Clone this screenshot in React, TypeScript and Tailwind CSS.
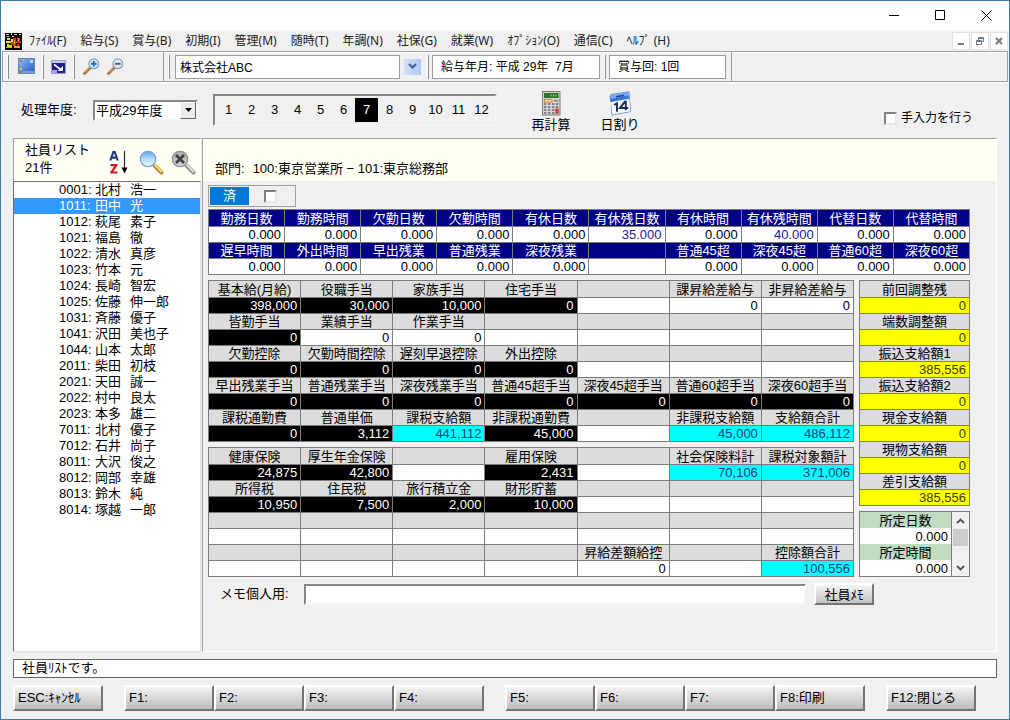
import { useState } from 'react';
import clsx from 'clsx';

type Tone = 'white' | 'black' | 'cyan' | 'yellow' | 'blue';
type Cell = [label: string, value: string, tone?: Tone];

const EMPTY: Cell = ['', ''];

const menus = [
  'ﾌｧｲﾙ(F)',
  '給与(S)',
  '賞与(B)',
  '初期(I)',
  '管理(M)',
  '随時(T)',
  '年調(N)',
  '社保(G)',
  '就業(W)',
  'ｵﾌﾟｼｮﾝ(O)',
  '通信(C)',
  'ﾍﾙﾌﾟ (H)',
];

const employees = [
  ['0001', '北村', '浩一'],
  ['1011', '田中', '光'],
  ['1012', '萩尾', '素子'],
  ['1021', '福島', '徹'],
  ['1022', '清水', '真彦'],
  ['1023', '竹本', '元'],
  ['1024', '長崎', '智宏'],
  ['1025', '佐藤', '伸一郎'],
  ['1031', '斉藤', '優子'],
  ['1041', '沢田', '美也子'],
  ['1044', '山本', '太郎'],
  ['2011', '柴田', '初枝'],
  ['2021', '天田', '誠一'],
  ['2022', '村中', '良太'],
  ['2023', '本多', '雄二'],
  ['7011', '北村', '優子'],
  ['7012', '石井', '尚子'],
  ['8011', '大沢', '俊之'],
  ['8012', '岡部', '幸雄'],
  ['8013', '鈴木', '純'],
  ['8014', '塚越', '一郎'],
];

const attendance: Cell[][] = [
  [
    ['勤務日数', '0.000'],
    ['勤務時間', '0.000'],
    ['欠勤日数', '0.000'],
    ['欠勤時間', '0.000'],
    ['有休日数', '0.000'],
    ['有休残日数', '35.000', 'blue'],
    ['有休時間', '0.000'],
    ['有休残時間', '40.000', 'blue'],
    ['代替日数', '0.000'],
    ['代替時間', '0.000'],
  ],
  [
    ['遅早時間', '0.000'],
    ['外出時間', '0.000'],
    ['早出残業', '0.000'],
    ['普通残業', '0.000'],
    ['深夜残業', '0.000'],
    EMPTY,
    ['普通45超', '0.000'],
    ['深夜45超', '0.000'],
    ['普通60超', '0.000'],
    ['深夜60超', '0.000'],
  ],
];

const payments: Cell[][] = [
  [
    ['基本給(月給)', '398,000', 'black'],
    ['役職手当', '30,000', 'black'],
    ['家族手当', '10,000', 'black'],
    ['住宅手当', '0', 'black'],
    EMPTY,
    ['課昇給差給与', '0'],
    ['非昇給差給与', '0'],
  ],
  [['皆勤手当', '0', 'black'], ['業績手当', '0'], ['作業手当', '0'], EMPTY, EMPTY, EMPTY, EMPTY],
  [
    ['欠勤控除', '0', 'black'],
    ['欠勤時間控除', '0', 'black'],
    ['遅刻早退控除', '0', 'black'],
    ['外出控除', '0', 'black'],
    EMPTY,
    EMPTY,
    EMPTY,
  ],
  [
    ['早出残業手当', '0', 'black'],
    ['普通残業手当', '0', 'black'],
    ['深夜残業手当', '0', 'black'],
    ['普通45超手当', '0', 'black'],
    ['深夜45超手当', '0', 'black'],
    ['普通60超手当', '0', 'black'],
    ['深夜60超手当', '0', 'black'],
  ],
  [
    ['課税通勤費', '0', 'black'],
    ['普通単価', '3,112', 'black'],
    ['課税支給額', '441,112', 'cyan'],
    ['非課税通勤費', '45,000', 'black'],
    EMPTY,
    ['非課税支給額', '45,000', 'cyan'],
    ['支給額合計', '486,112', 'cyan'],
  ],
];

const deductions: Cell[][] = [
  [
    ['健康保険', '24,875', 'black'],
    ['厚生年金保険', '42,800', 'black'],
    EMPTY,
    ['雇用保険', '2,431', 'black'],
    EMPTY,
    ['社会保険料計', '70,106', 'cyan'],
    ['課税対象額計', '371,006', 'cyan'],
  ],
  [
    ['所得税', '10,950', 'black'],
    ['住民税', '7,500', 'black'],
    ['旅行積立金', '2,000', 'black'],
    ['財形貯蓄', '10,000', 'black'],
    EMPTY,
    EMPTY,
    EMPTY,
  ],
  [EMPTY, EMPTY, EMPTY, EMPTY, EMPTY, EMPTY, EMPTY],
  [EMPTY, EMPTY, EMPTY, EMPTY, ['昇給差額給控', '0'], EMPTY, ['控除額合計', '100,556', 'cyan']],
];

const totals: Cell[][] = [
  [['前回調整残', '0', 'yellow']],
  [['端数調整額', '0', 'yellow']],
  [['振込支給額1', '385,556', 'yellow']],
  [['振込支給額2', '0', 'yellow']],
  [['現金支給額', '0', 'yellow']],
  [['現物支給額', '0', 'yellow']],
  [['差引支給額', '385,556', 'yellow']],
];

const scheduled: Cell[][] = [[['所定日数', '0.000']], [['所定時間', '0.000']]];

const tones: Record<Tone, string> = {
  white: 'bg-white text-black',
  black: 'bg-black text-white',
  cyan: 'bg-[#00ffff] text-[#203c78]',
  yellow: 'bg-[#ffff00] text-[#3c3c00]',
  blue: 'bg-white text-[#1c1c8c]',
};

const sunken = 'border-2 border-t-[#868686] border-l-[#868686] border-r-[#f4f4f4] border-b-[#f4f4f4]';

function DataGrid({ rows, head, label, plain }: { rows: Cell[][]; head: string; label: string; plain?: boolean }) {
  const edge = plain ? 'border-0' : 'border border-[#7c7c7c]';
  return (
    <table aria-label={label} className="w-full table-fixed border-collapse text-[13px] leading-[15px]">
      {rows.map((row, r) => (
        <tbody key={r}>
          <tr className={r === 0 && !plain ? 'h-[17px]' : 'h-4'}>
            {row.map(([name], c) => (
              <th key={c} className={clsx('p-0 text-center font-normal whitespace-nowrap', edge, head)}>
                {name}
              </th>
            ))}
          </tr>
          <tr className="h-4">
            {row.map(([, value, tone], c) => (
              <td key={c} className={clsx('py-0 pr-[3px] pl-0 text-right', edge, tones[tone ?? 'white'])}>
                {value}
              </td>
            ))}
          </tr>
        </tbody>
      ))}
    </table>
  );
}

function CheckBox({ id, label }: { id: string; label?: string }) {
  return (
    <input
      id={id}
      type="checkbox"
      aria-label={label}
      className="size-[13px] shrink-0 appearance-none border-2 border-t-[#808080] border-r-[#e6e6e6] border-b-[#e6e6e6] border-l-[#808080] bg-white checked:bg-[#404040]"
    />
  );
}

function KeyButton({ children }: { children: string }) {
  return (
    <button className="h-[26px] w-[90px] border-2 border-t-white border-r-[#747474] border-b-[#747474] border-l-white bg-linear-to-b from-[#f4f4f4] to-[#bcbcbc] pl-[3px] text-left text-[13px] leading-5 whitespace-nowrap">
      {children}
    </button>
  );
}

function AppIcon() {
  return (
    <svg width="17" height="17" viewBox="0 0 17 17" shapeRendering="crispEdges" aria-hidden="true">
      <rect width="17" height="17" fill="#000" />
      <path d="M1 1h3v1H1zM6 0h1v2H6zM9 1h3v1H9zM14 1h2v1h-2zM2 3h2v1H2zM7 3h2v1H7z" fill="#e8d8c8" />
      <path d="M2 5h3v2H2zM1 8h5v2H1zM2 11h2v3H2zM4 12h3v2H4zM6 6h2v3H6z" fill="#f8d820" />
      <path d="M8 5h3v8H8zM12 5h3v4h-3zM11 8h5v2h-5zM12 11h2v2h-2zM6 9h2v3H6z" fill="#e02c18" />
      <path d="M1 14h6v1H1zM9 13h6v2H9zM9 7h1v4H9zM13 6h1v2h-1z" fill="#f8a020" />
    </svg>
  );
}

function ScreenIcon() {
  return (
    <svg width="17" height="17" viewBox="0 0 17 17" aria-hidden="true">
      <defs>
        <linearGradient id="screen" x1="0" y1="0" x2="1" y2="1">
          <stop offset="0" stopColor="#8cc0f8" />
          <stop offset="1" stopColor="#2454c0" />
        </linearGradient>
      </defs>
      <rect x="0.5" y="0.5" width="16" height="15" fill="url(#screen)" stroke="#6c84b0" />
      <rect x="1" y="13" width="15" height="2" fill="#7c9cd0" />
      <rect x="2" y="2" width="2" height="2" fill="#d86040" />
      <rect x="2" y="6" width="2" height="2" fill="#70c070" />
      <rect x="2" y="10" width="2" height="2" fill="#e8c850" />
      <rect x="12" y="2" width="3" height="3" fill="#a8e4f8" />
      <rect x="1" y="13" width="4" height="2" fill="#58a850" />
    </svg>
  );
}

function ShrinkIcon() {
  return (
    <svg width="15" height="14" viewBox="0 0 15 14" aria-hidden="true">
      <rect x="0.5" y="0.5" width="14" height="13" fill="#20208c" stroke="#9c9cc8" />
      <path d="M1 1h13v2H1z" fill="#c8ccec" />
      <path d="M1 10h5v3H1z" fill="#a4a8dc" />
      <path d="M3 4.5l6.5 4.8" fill="none" stroke="#fff" strokeWidth="1.6" />
      <path d="M12 6v5H6.5z" fill="#fff" />
    </svg>
  );
}

function ZoomIcon({ plus }: { plus?: boolean }) {
  return (
    <svg width="17" height="17" viewBox="0 0 17 17" aria-hidden="true">
      <path d="M1.5 15.5L8 9" stroke="#a86838" strokeWidth="2.6" strokeLinecap="round" />
      <path d="M1.8 14.6L7 9.4" stroke="#e8b888" strokeWidth="0.9" />
      <circle cx="10.8" cy="5.8" r="4.9" fill="#d4ecfc" stroke="#7ca0c8" strokeWidth="1.2" />
      <path d="M8 5.8h5.6" stroke={plus ? '#2468c0' : '#a83c30'} strokeWidth="1.9" />
      {plus && <path d="M10.8 3v5.6" stroke="#2468c0" strokeWidth="1.9" />}
    </svg>
  );
}

function SortIcon() {
  return (
    <svg width="20" height="25" viewBox="0 0 20 25" aria-hidden="true">
      <path d="M1.3 10.5L4.3 2h1.4l3 8.5M2.6 7.6h4.8" fill="none" stroke="#1c3c78" strokeWidth="2.1" />
      <path d="M1.5 14h7v1.6L4.4 21.4h4.2v2.2H1.2V22l4.1-5.8H1.5z" fill="#d01828" />
      <path d="M15.5 1v18" stroke="#303030" strokeWidth="1.2" />
      <path d="M12.5 17.5h6l-3 6z" fill="#000" />
    </svg>
  );
}

function SearchIcon({ cancel }: { cancel?: boolean }) {
  const id = cancel ? 'lensOff' : 'lensOn';
  return (
    <svg width="25" height="25" viewBox="0 0 25 25" aria-hidden="true">
      <defs>
        <linearGradient id={id} x1="0" y1="0" x2="0" y2="1">
          <stop offset="0" stopColor={cancel ? '#a8a8a8' : '#5ca8ec'} />
          <stop offset="0.5" stopColor={cancel ? '#c0c0c0' : '#b4dcfc'} />
          <stop offset="1" stopColor={cancel ? '#dcdcdc' : '#ecf8ff'} />
        </linearGradient>
      </defs>
      <path d="M15.5 15.5l7 7" stroke={cancel ? '#8c8c8c' : '#b08428'} strokeWidth="4" strokeLinecap="round" />
      <path d="M16 15l6.5 6.8" stroke={cancel ? '#dcdcdc' : '#fcd470'} strokeWidth="2" strokeLinecap="round" />
      <circle cx="9" cy="9" r="7.7" fill={`url(#${id})`} stroke={cancel ? '#909090' : '#7ca4d0'} strokeWidth="1.3" />
      {cancel && <path d="M5 5l8 8M13 5l-8 8" stroke="#404040" strokeWidth="2.6" />}
    </svg>
  );
}

function CalculatorIcon() {
  return (
    <svg width="19" height="25" viewBox="0 0 19 25" aria-hidden="true">
      <rect x="0.5" y="0.5" width="17.5" height="23.5" fill="#d4d4d0" stroke="#787874" />
      <rect x="2" y="2" width="14.5" height="5" fill="#287828" />
      <path d="M9 3.5v2M11.5 3.5v2M14 3.5v2" stroke="#90e890" />
      <rect x="2.5" y="8.5" width="7.5" height="2.5" fill="#fce890" stroke="#d09020" />
      <path d="M12 9.8h4.5" stroke="#909090" strokeWidth="2" />
      {[13, 16, 19, 22].map(y => (
        <path key={y} d={`M2 ${y}h2.4M6 ${y}h2.4M10 ${y}h2.4M13.8 ${y}h2.4`} stroke="#80848c" strokeWidth="1.8" />
      ))}
      <rect x="13.3" y="17.5" width="3.4" height="5" fill="#d84038" />
    </svg>
  );
}

function CalendarIcon() {
  return (
    <svg width="22" height="25" viewBox="0 0 22 25" aria-hidden="true">
      <path d="M2 3.5L20 0.8l1.5 19.7L3 24z" fill="#c4d8f8" stroke="#5c80c8" strokeWidth="0.9" />
      <path d="M0.5 5L18 2l2.5 5.5L1.5 11z" fill="#3870d8" />
      <path d="M1 4.5L19 1.6l1 3L1.6 8z" fill="#78a8f4" />
      <path d="M7 5.8l8-1.4" stroke="#2048a8" strokeWidth="1.6" />
      <path d="M2 11.3l18.4-3 .8 12L3.4 23.4z" fill="#f4f8ff" />
      <path d="M5 14l3-1.6v8.4M16.8 19.2v-8.4h-1L11 17h8.2" fill="none" stroke="#182c50" strokeWidth="1.9" />
    </svg>
  );
}

function Grip() {
  return <span className="h-6 w-[2px] shrink-0 border-r border-l border-r-[#8c8c8c] border-l-white" />;
}

function TitleBar() {
  return (
    <header className="flex h-[30px] items-start justify-end gap-[10px] bg-white pt-[5px] pr-[5px]">
      <button aria-label="最小化" className="flex h-[18px] w-9 items-center justify-center">
        <svg width="11" height="11" viewBox="0 0 11 11" stroke="#000"><path d="M0 5.5h10" /></svg>
      </button>
      <button aria-label="最大化" className="flex h-[18px] w-9 items-center justify-center">
        <svg width="11" height="11" viewBox="0 0 11 11" fill="none" stroke="#000"><path d="M.5.5h9v9H.5z" /></svg>
      </button>
      <button aria-label="閉じる" className="flex h-[18px] w-9 items-center justify-center">
        <svg width="11" height="11" viewBox="0 0 11 11" stroke="#000"><path d="M.5.5l10 10M10.5.5l-10 10" /></svg>
      </button>
    </header>
  );
}

function MenuBar() {
  const small = 'flex h-[18px] w-[18px] items-center justify-center border border-[#e0e0e0] bg-white';
  return (
    <nav className="flex h-5 items-center pr-px pl-1">
      <AppIcon />
      <div className="ml-[7px] flex flex-1 gap-[14px] font-['Noto_Sans','Noto_Sans_CJK_JP',sans-serif] text-xs leading-[18px] whitespace-nowrap text-[#202020]">
        {menus.map(m => (
          <button key={m}>{m}</button>
        ))}
      </div>
      <div className="flex gap-px">
        <button aria-label="子ウィンドウを最小化" className={small}>
          <svg width="8" height="8" viewBox="0 0 8 8" stroke="#6c7c88" strokeWidth="2"><path d="M1 7h6" /></svg>
        </button>
        <button aria-label="子ウィンドウを元に戻す" className={small}>
          <svg width="8" height="8" viewBox="0 0 8 8" fill="none" stroke="#6c7c88"><path d="M2.5 3V.5h5v4H6M2.5 1.5h5M.5 3.5h5v4h-5zM.5 4.5h5" /></svg>
        </button>
        <button aria-label="子ウィンドウを閉じる" className={small}>
          <svg width="8" height="8" viewBox="0 0 8 8" stroke="#6c7c88" strokeWidth="2"><path d="M1 1l6 6M7 1L1 7" /></svg>
        </button>
      </div>
    </nav>
  );
}

function ToolBar() {
  const field = 'h-[24px] border border-[#9c9c9c] bg-white text-xs leading-[23px]';
  return (
    <div className="mx-px border border-[#a0a0a0] shadow-[inset_0_1px_#fff,0_1px_#fff]">
      <div className="flex h-[29px] w-[729px] items-center border-r border-[#9c9c9c]">
        <div className="flex h-full w-[161px] items-center border-r border-[#9c9c9c] pl-1">
          <Grip />
          <button aria-label="画面" className="ml-[9px]"><ScreenIcon /></button>
          <span className="mx-[7px] flex"><Grip /></span>
          <button aria-label="縮小表示"><ShrinkIcon /></button>
          <span className="mr-2 ml-[7px] flex"><Grip /></span>
          <button aria-label="拡大" className="mr-[7px]"><ZoomIcon plus /></button>
          <button aria-label="縮小"><ZoomIcon /></button>
        </div>
        <span className="mr-[5px] ml-1 flex"><Grip /></span>
        <input aria-label="会社名" readOnly value="株式会社ABC" className={clsx(field, 'w-[225px] px-1')} />
        <button
          aria-label="会社を選択"
          className="mr-[6px] ml-1 flex h-4 w-[17px] items-center justify-center bg-linear-to-r from-[#d0e0fc] to-[#b0c8f4]"
        >
          <svg width="9" height="7" viewBox="0 0 9 7" fill="none" stroke="#405c98" strokeWidth="2"><path d="M1 1l3.5 3.5L8 1" /></svg>
        </button>
        <Grip />
        <div className={clsx(field, 'ml-[3px] w-[168px] pl-2 whitespace-pre')}>給与年月: 平成 29年  7月</div>
        <span className="mr-[3px] ml-1 flex"><Grip /></span>
        <div className={clsx(field, 'w-[117px] pl-2')}>賞与回: 1回</div>
      </div>
    </div>
  );
}

function PeriodBar({ month, onMonth }: { month: number; onMonth: (m: number) => void }) {
  return (
    <div className="flex h-[56px] items-center pr-9 pl-5">
      <label htmlFor="year" className="w-[72px] text-[13px]">処理年度:</label>
      <div className="relative">
        <select
          id="year"
          className={clsx('block h-[21px] w-[105px] appearance-none bg-white pl-px text-[13px] leading-[17px]', sunken)}
        >
          <option>平成29年度</option>
        </select>
        <span className="pointer-events-none absolute top-[2px] right-[2px] flex h-[17px] w-4 items-center justify-center border border-t-white border-r-[#606060] border-b-[#606060] border-l-white bg-[#ececec]">
          <svg width="7" height="4" viewBox="0 0 7 4"><path d="M0 0h7L3.5 4z" /></svg>
        </span>
      </div>
      <div className={clsx('ml-[15px] flex p-[2px]', sunken)}>
        {Array.from({ length: 12 }, (_, i) => i + 1).map(m => (
          <button
            key={m}
            onClick={() => onMonth(m)}
            className={clsx('h-6 w-[23px] text-[13px]', m === month && 'bg-black text-white')}
          >
            {m}
          </button>
        ))}
      </div>
      <button className="ml-[29px] flex w-[50px] flex-col items-center pt-[5px] text-[13px] leading-[18px]">
        <CalculatorIcon />
        再計算
      </button>
      <button className="ml-[19px] flex w-[50px] flex-col items-center pt-[5px] text-[13px] leading-[18px]">
        <CalendarIcon />
        日割り
      </button>
      <div className="ml-auto flex items-center gap-1 pt-4">
        <CheckBox id="manual" />
        <label htmlFor="manual" className="text-xs leading-4">手入力を行う</label>
      </div>
    </div>
  );
}

function EmployeeList() {
  const [selected, setSelected] = useState('1011');
  return (
    <aside className="flex w-[188px] shrink-0 flex-col">
      <div className="flex h-[43px] items-start border-t border-l border-[#a0a0a0] bg-[#fffff4] pl-[11px] text-[13px] leading-[18px]">
        <div className="w-[84px] pt-[2px]">
          <h2>社員リスト</h2>
          <p>21件</p>
        </div>
        <div className="flex gap-[7px] pt-[11px]">
          <button aria-label="並べ替え" className="mr-[3px]"><SortIcon /></button>
          <button aria-label="検索"><SearchIcon /></button>
          <button aria-label="検索解除"><SearchIcon cancel /></button>
        </div>
      </div>
      <ul className="flex-1 border border-t-[#707070] border-r-[#e0e0e0] border-b-[#e0e0e0] border-l-[#707070] bg-white text-[13px] leading-4">
        {employees.map(([code, family, given]) => (
          <li key={code}>
            <button
              onClick={() => setSelected(code)}
              className={clsx('flex h-4 w-full pl-[45px] text-left', code === selected && 'bg-[#3399ff] text-white')}
            >
              <span className="w-9">{code}:</span>
              <span className="w-[35px]">{family}</span>
              <span>{given}</span>
            </button>
          </li>
        ))}
      </ul>
    </aside>
  );
}

function Scheduled() {
  return (
    <div className="flex h-[66px] border border-[#7c7c7c]">
      <div className="flex-1 border-r border-[#7c7c7c]">
        <DataGrid rows={scheduled} head="bg-[#c0dcc0]" label="所定" plain />
      </div>
      <div className="flex w-[17px] flex-col justify-between bg-[#f0f0f0]">
        <button aria-label="上へ" className="flex h-[17px] items-center justify-center">
          <svg width="9" height="6" viewBox="0 0 9 6" fill="none" stroke="#505050" strokeWidth="1.8"><path d="M1 5l3.5-3.5L8 5" /></svg>
        </button>
        <div className="mx-px h-[17px] bg-[#cdcdcd]" />
        <div className="flex-1" />
        <button aria-label="下へ" className="flex h-[17px] items-center justify-center">
          <svg width="9" height="6" viewBox="0 0 9 6" fill="none" stroke="#505050" strokeWidth="1.8"><path d="M1 1l3.5 3.5L8 1" /></svg>
        </button>
      </div>
    </div>
  );
}

function PaySlip() {
  return (
    <section className="flex min-w-0 flex-1 flex-col border border-t-[#a0a0a0] border-r-white border-b-white border-l-[#a0a0a0]">
      <div className="h-[42px] bg-[#fffff4] pt-[21px] pl-3 text-[13px] leading-[18px]">
        部門:<span className="ml-2">100:東京営業所 − 101:東京総務部</span>
      </div>
      <div className="flex flex-col pt-1 pr-[26px] pl-[5px]">
        <div className="mb-[2px] flex h-[22px] w-[88px] border border-[#a0a0a0] p-px">
          <label htmlFor="done" className="w-[39px] bg-[#0078d7] text-center text-[13px] leading-[17px] text-white">
            済
          </label>
          <span className="flex flex-1 items-center justify-center pr-[3px]">
            <CheckBox id="done" />
          </span>
        </div>
        <DataGrid rows={attendance} head="bg-[#000084] text-white" label="勤怠" />
        <div className="mt-[5px] flex gap-[5px]">
          <div className="flex min-w-0 flex-1 flex-col gap-[5px]">
            <DataGrid rows={payments} head="bg-[#dcdcdc]" label="支給" />
            <DataGrid rows={deductions} head="bg-[#dcdcdc]" label="控除" />
          </div>
          <div className="flex w-[111px] shrink-0 flex-col gap-[5px]">
            <DataGrid rows={totals} head="bg-[#dcdcdc]" label="差引支給" />
            <Scheduled />
          </div>
        </div>
        <div className="mt-[6px] flex items-center pr-24 pl-3 text-[13px]">
          <label htmlFor="memo" className="w-[84px]">メモ個人用:</label>
          <input id="memo" className={clsx('h-[21px] min-w-0 flex-1 bg-white px-1', sunken)} />
          <button className="ml-2 h-[22px] w-[60px] border-2 border-t-white border-r-[#747474] border-b-[#747474] border-l-white bg-linear-to-b from-[#f4f4f4] to-[#c4c4c4] leading-[17px]">
            社員ﾒﾓ
          </button>
        </div>
      </div>
    </section>
  );
}

export default function App() {
  const [month, setMonth] = useState(7);

  return (
    <div className="flex min-h-screen flex-col border border-[#3c7ca0] bg-[#f0f0f0] font-['Liberation_Sans','Noto_Sans_CJK_JP',sans-serif] text-black">
      <TitleBar />
      <MenuBar />
      <ToolBar />
      <PeriodBar month={month} onMonth={setMonth} />
      <main className="flex flex-1 gap-px pr-3 pl-3">
        <EmployeeList />
        <PaySlip />
      </main>
      <footer className="px-3 pt-[7px] pb-2">
        <p role="status" className="h-[19px] border border-[#646464] bg-white pl-2 text-[13px] leading-4">
          社員ﾘｽﾄです。
        </p>
        <div className="mt-[7px] flex gap-[21px]">
          <KeyButton>ESC:ｷｬﾝｾﾙ</KeyButton>
          <div className="flex">
            <KeyButton>F1:</KeyButton>
            <KeyButton>F2:</KeyButton>
            <KeyButton>F3:</KeyButton>
            <KeyButton>F4:</KeyButton>
          </div>
          <div className="flex">
            <KeyButton>F5:</KeyButton>
            <KeyButton>F6:</KeyButton>
            <KeyButton>F7:</KeyButton>
            <KeyButton>F8:印刷</KeyButton>
          </div>
          <KeyButton>F12:閉じる</KeyButton>
        </div>
      </footer>
    </div>
  );
}
